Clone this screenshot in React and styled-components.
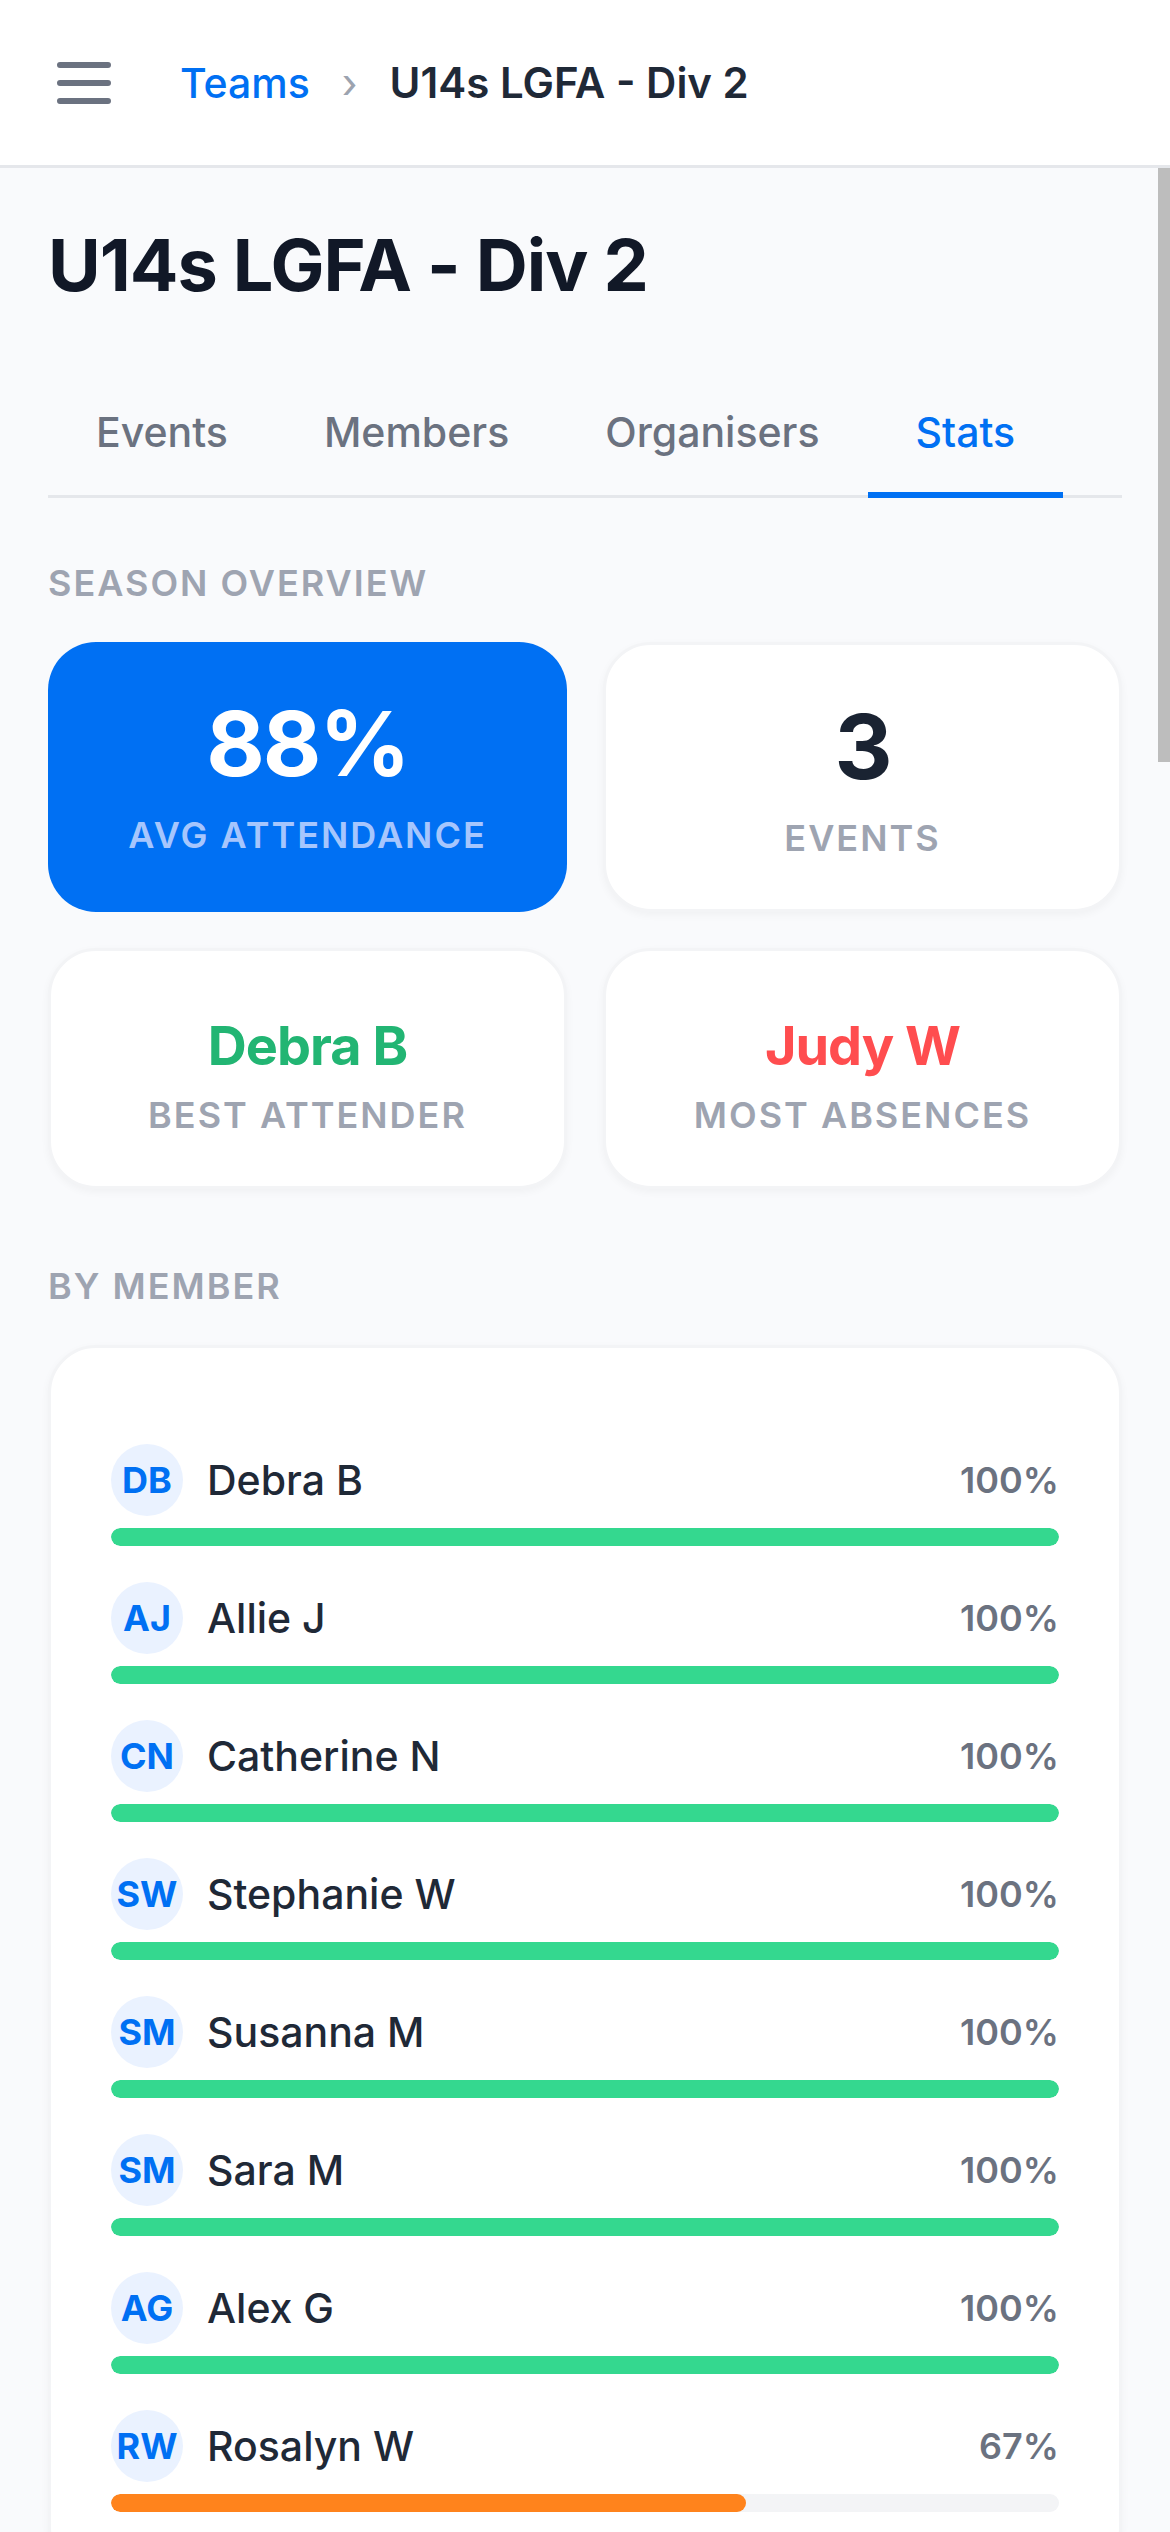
import React from "react";
import styled, { createGlobalStyle } from "styled-components";

const GlobalStyle = createGlobalStyle`
  *, *::before, *::after { box-sizing: border-box; }
  body {
    margin: 0;
    background: #f9fafc;
    color: #1f2937;
    font-family: Inter, "Liberation Sans", sans-serif;
    font-size: 41px;
    line-height: 60px;
  }
`;

const Screen = styled.div`
  display: flex;
  flex-direction: column;
  height: 100vh;
`;

const TopBar = styled.header`
  display: flex;
  align-items: center;
  gap: 60px;
  flex: none;
  min-height: 168px;
  padding: 0 48px;
  background: #ffffff;
  border-bottom: 3px solid #e5e7eb;
`;

const MenuButton = styled.button`
  display: flex;
  padding: 0;
  border: 0;
  background: none;
  color: #6b7280;
  cursor: pointer;
`;

const Breadcrumb = styled.nav`
  display: flex;
  align-items: center;
  gap: 32px;
  font-weight: 500;
`;

const CrumbLink = styled.a`
  color: #0070f3;
  text-decoration: none;
`;

const CrumbDivider = styled.span`
  color: #9ca3af;
  font-weight: 400;
`;

const CrumbCurrent = styled.span`
  font-size: 42px;
  font-weight: 600;
`;

const Viewport = styled.div`
  position: relative;
  flex: 1;
  min-height: 0;
`;

const Content = styled.main`
  height: 100%;
  overflow-y: auto;
  scrollbar-width: none;
  padding: 48px;
`;

const ScrollThumb = styled.div`
  position: absolute;
  top: 0;
  right: 0;
  width: 12px;
  height: 594px;
  background: #bdbdbd;
`;

const Title = styled.h1`
  margin: 0 0 52px;
  color: #111827;
  font-size: 72px;
  line-height: 98px;
  font-weight: 700;
  letter-spacing: -1px;
`;

const Tabs = styled.div`
  display: flex;
  margin-bottom: 60px;
  box-shadow: inset 0 -3px #e5e7eb;
`;

const Tab = styled.button`
  padding: 36px 48px 30px;
  border: 0;
  border-bottom: 6px solid ${({ $active }) => ($active ? "#0070f3" : "transparent")};
  background: none;
  color: ${({ $active }) => ($active ? "#0070f3" : "#6b7280")};
  font: inherit;
  font-weight: 500;
  cursor: pointer;
`;

const SectionLabel = styled.h2`
  margin: 0 0 34px;
  color: #9ea4b1;
  font-size: 36px;
  line-height: 50px;
  font-weight: 600;
  letter-spacing: 2px;
  text-transform: uppercase;
`;

const StatGrid = styled.div`
  display: grid;
  grid-template-columns: 1fr 1fr;
  gap: 36px;
  margin-bottom: 72px;
`;

const Card = styled.section`
  background: #ffffff;
  border: 3px solid #f3f4f6;
  border-radius: 48px;
  box-shadow: 0 3px 9px rgba(0, 0, 0, 0.04);
`;

const StatCard = styled(Card)`
  display: flex;
  flex-direction: column;
  align-items: center;
  gap: 12px;
  padding: 48px 48px 46px;
  ${({ $primary }) =>
    $primary &&
    `
    background: #0070f3;
    border: 0;
    box-shadow: none;
  `}
`;

const StatNumber = styled.div`
  color: ${({ $color }) => $color};
  font-size: 90px;
  line-height: 108px;
  font-weight: 700;
  letter-spacing: -2px;
`;

const StatName = styled.div`
  padding-top: 15px;
  color: ${({ $color }) => $color};
  font-size: 54px;
  line-height: 64px;
  font-weight: 700;
  letter-spacing: -1px;
`;

const StatLabel = styled.div`
  color: ${({ $onPrimary }) => ($onPrimary ? "#a6c6fd" : "#9ea4b1")};
  font-size: 36px;
  line-height: 50px;
  font-weight: 600;
  letter-spacing: 2px;
  text-transform: uppercase;
`;

const MemberCard = styled(Card)`
  padding: 60px;
`;

const MemberList = styled.ul`
  margin: 0;
  padding: 0;
  list-style: none;
`;

const MemberRow = styled.li`
  display: flex;
  flex-direction: column;
  gap: 12px;
  padding-top: 36px;
`;

const MemberInfo = styled.div`
  display: flex;
  align-items: center;
  gap: 24px;
`;

const Avatar = styled.span`
  display: flex;
  align-items: center;
  justify-content: center;
  width: 72px;
  height: 72px;
  border-radius: 50%;
  background: #eaf2ff;
  color: #0070f3;
  font-size: 36px;
  font-weight: 700;
`;

const MemberName = styled.span`
  flex: 1;
  font-weight: 500;
`;

const Percent = styled.span`
  color: #6b7280;
  font-size: 36px;
  font-weight: 600;
`;

const Track = styled.div`
  height: 18px;
  border-radius: 9px;
  background: #f3f4f6;
  overflow: hidden;
`;

const Fill = styled.div`
  height: 100%;
  border-radius: 9px;
  background: ${({ $full }) => ($full ? "#34d88f" : "#ff831c")};
`;

const members = [
  { initials: "DB", name: "Debra B", rate: 100 },
  { initials: "AJ", name: "Allie J", rate: 100 },
  { initials: "CN", name: "Catherine N", rate: 100 },
  { initials: "SW", name: "Stephanie W", rate: 100 },
  { initials: "SM", name: "Susanna M", rate: 100 },
  { initials: "SM", name: "Sara M", rate: 100 },
  { initials: "AG", name: "Alex G", rate: 100 },
  { initials: "RW", name: "Rosalyn W", rate: 67 },
];

const tabs = ["Events", "Members", "Organisers", "Stats"];

export default function App() {
  const [active, setActive] = React.useState("Stats");
  return (
    <>
      <GlobalStyle />
      <Screen>
        <TopBar>
          <MenuButton type="button" aria-label="Menu">
            <svg width="72" height="72" viewBox="0 0 24 24" fill="none" stroke="currentColor" strokeWidth="2" strokeLinecap="round">
              <path d="M4 6h16M4 12h16M4 18h16" />
            </svg>
          </MenuButton>
          <Breadcrumb aria-label="Breadcrumb">
            <CrumbLink href="#teams">Teams</CrumbLink>
            <CrumbDivider>›</CrumbDivider>
            <CrumbCurrent>U14s LGFA - Div 2</CrumbCurrent>
          </Breadcrumb>
        </TopBar>
        <Viewport>
          <Content>
            <Title>U14s LGFA - Div 2</Title>
            <Tabs role="tablist">
              {tabs.map((tab) => (
                <Tab
                  key={tab}
                  type="button"
                  role="tab"
                  aria-selected={tab === active}
                  $active={tab === active}
                  onClick={() => setActive(tab)}
                >
                  {tab}
                </Tab>
              ))}
            </Tabs>
            <SectionLabel>Season overview</SectionLabel>
            <StatGrid>
              <StatCard $primary>
                <StatNumber $color="#ffffff">88%</StatNumber>
                <StatLabel $onPrimary>Avg attendance</StatLabel>
              </StatCard>
              <StatCard>
                <StatNumber $color="#1a2332">3</StatNumber>
                <StatLabel>Events</StatLabel>
              </StatCard>
              <StatCard>
                <StatName $color="#22b573">Debra B</StatName>
                <StatLabel>Best attender</StatLabel>
              </StatCard>
              <StatCard>
                <StatName $color="#ff4d4f">Judy W</StatName>
                <StatLabel>Most absences</StatLabel>
              </StatCard>
            </StatGrid>
            <SectionLabel>By member</SectionLabel>
            <MemberCard>
              <MemberList>
                {members.map((m) => (
                  <MemberRow key={m.name}>
                    <MemberInfo>
                      <Avatar>{m.initials}</Avatar>
                      <MemberName>{m.name}</MemberName>
                      <Percent>{m.rate}%</Percent>
                    </MemberInfo>
                    <Track>
                      <Fill $full={m.rate === 100} style={{ width: `${m.rate}%` }} />
                    </Track>
                  </MemberRow>
                ))}
              </MemberList>
            </MemberCard>
          </Content>
          <ScrollThumb aria-hidden="true" />
        </Viewport>
      </Screen>
    </>
  );
}
